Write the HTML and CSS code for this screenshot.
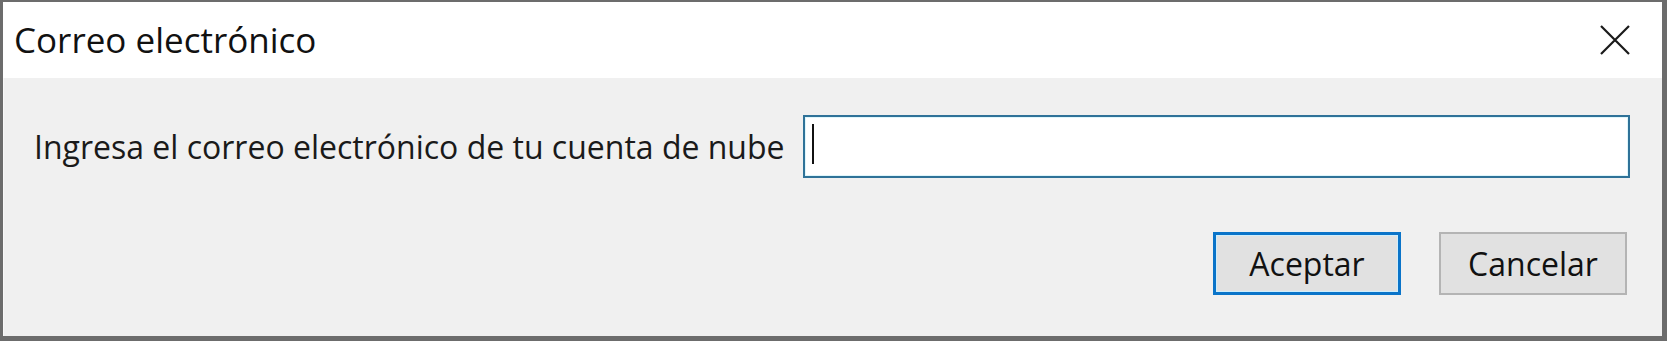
FILE: index.html
```html
<!DOCTYPE html>
<html lang="es">
<head>
<meta charset="utf-8">
<title>Correo electrónico</title>
<link rel="stylesheet" href="styles.css">
</head>
<body>
<div class="window">
  <div class="titlebar">
    <span class="title">Correo electrónico</span>
    <svg class="close" width="30" height="30" viewBox="0 0 30 30" aria-hidden="true">
      <path d="M1 1 L29 29 M29 1 L1 29" stroke="#1a1a1a" stroke-width="2.2" fill="none"/>
    </svg>
  </div>
  <div class="content">
    <div class="row">
      <label class="label" for="email">Ingresa el correo electrónico de tu cuenta de nube</label>
      <div class="input" id="email"><span class="caret"></span></div>
    </div>
    <div class="buttons">
      <button class="btn btn-default">Aceptar</button>
      <button class="btn">Cancelar</button>
    </div>
  </div>
</div>
</body>
</html>
```
FILE: styles.css
```css
html, body {
  margin: 0;
  padding: 0;
  background: #ffffff;
}
body {
  font-family: "Open Sans", "Noto Sans", "Liberation Sans", sans-serif;
  color: #111;
}
.window {
  width: 1667px;
  height: 341px;
  box-sizing: border-box;
  border-style: solid;
  border-color: #6c6c6c;
  border-width: 2px 5px 5px 3px;
  display: flex;
  flex-direction: column;
  background: #f0f0f0;
}
.titlebar {
  height: 76px;
  flex: none;
  background: #ffffff;
  display: flex;
  align-items: center;
  justify-content: space-between;
  padding: 0 32px 0 11px;
}
.title {
  font-size: 35px;
  color: #111;
  letter-spacing: 0;
  margin-top: -1px;
}
.close {
  display: block;
  margin-top: 0;
}
.content {
  flex: 1;
  display: flex;
  flex-direction: column;
  padding: 37px 32px 0 30px;
  border-left: 1px solid #f8f8f8;
}
.row {
  display: flex;
  align-items: center;
  justify-content: space-between;
}
.label {
  font-size: 32px;
  color: #1a1a1a;
  padding-top: 0;
  white-space: nowrap;
}
.input {
  width: 827px;
  height: 63px;
  box-sizing: border-box;
  background: #ffffff;
  border: 2px solid #2f7298;
  box-shadow: inset 0 0 0 1px #dff6fb;
  display: flex;
  align-items: center;
  padding-left: 7px;
}
.caret {
  display: block;
  width: 2px;
  height: 40px;
  background: #111;
  margin-top: -6px;
}
.buttons {
  display: flex;
  justify-content: flex-end;
  gap: 38px;
  margin-top: 54px;
  margin-right: 3px;
}
.btn {
  font-family: inherit;
  font-size: 32px;
  color: #111;
  width: 188px;
  height: 63px;
  box-sizing: border-box;
  background: #e1e1e1;
  border: 2px solid #b4b4b4;
  padding: 0;
  margin: 0;
}
.btn-default {
  border: 3px solid #0a74c9;
  box-shadow: inset 0 0 0 1px #cfeefc;
}
```
